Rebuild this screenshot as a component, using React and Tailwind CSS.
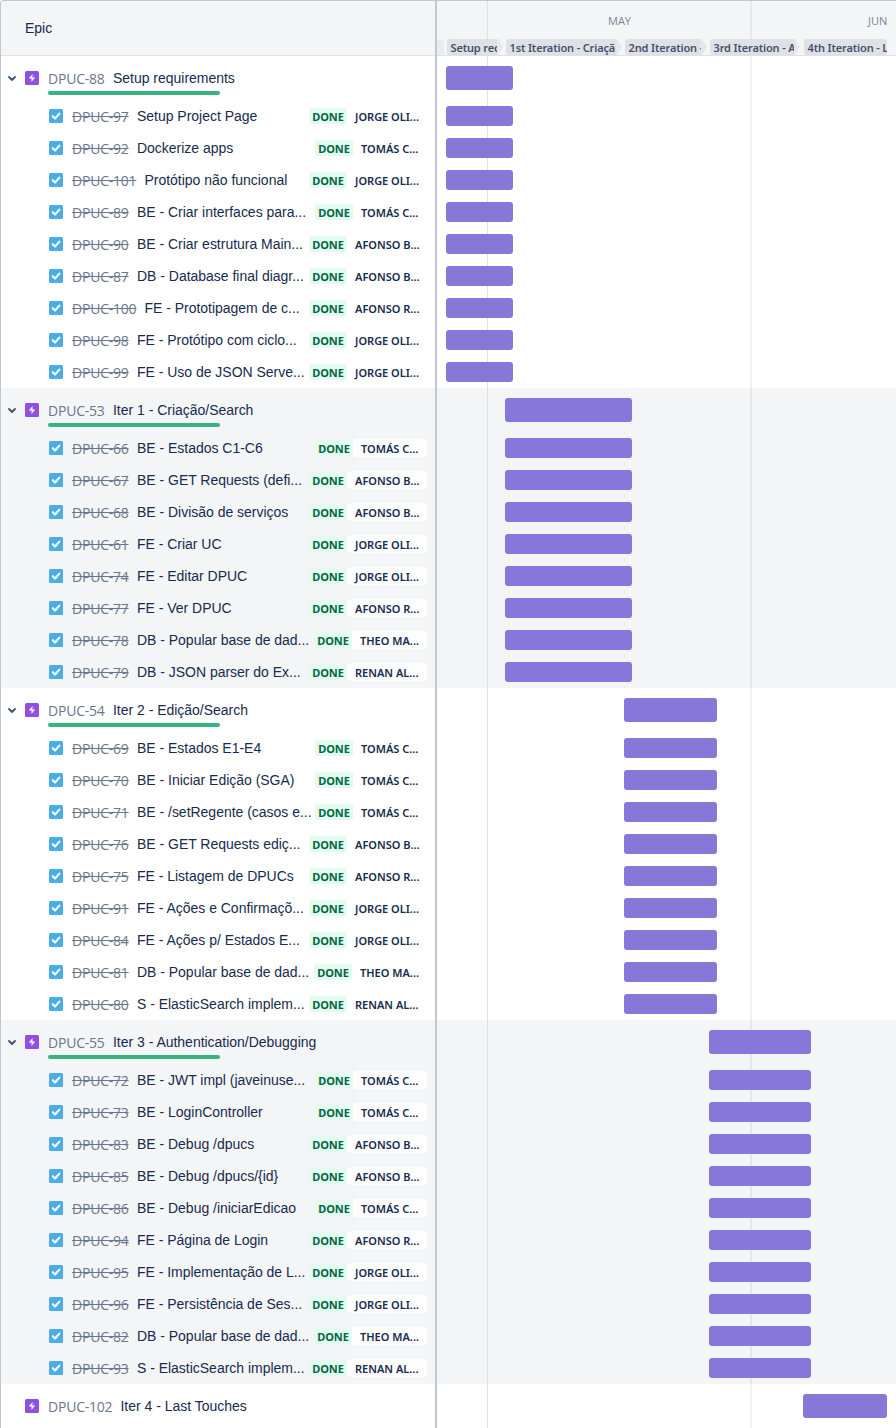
import React from "react";

const PEOPLE = {
  J: { name: "JORGE OLI...", pill: "w-[80px]", text: "w-[64px]" },
  T: { name: "TOMÁS C...", pill: "w-[74px]", text: "w-[58px]" },
  B: { name: "AFONSO B...", pill: "w-[80px]", text: "w-[64px]" },
  R: { name: "AFONSO R...", pill: "w-[80px]", text: "w-[64px]" },
  M: { name: "THEO MA...", pill: "w-[75px]", text: "w-[59px]" },
  A: { name: "RENAN AL...", pill: "w-[80px]", text: "w-[64px]" },
};

const EPICS = [
  {
    id: "DPUC-88", title: "Setup requirements", bar: "ml-[9px] w-[67px]",
    tasks: [
      ["97", "Setup Project Page", "J"],
      ["92", "Dockerize apps", "T"],
      ["101", "Protótipo não funcional", "J"],
      ["89", "BE - Criar interfaces para...", "T"],
      ["90", "BE - Criar estrutura Main...", "B"],
      ["87", "DB - Database final diagr...", "B"],
      ["100", "FE - Prototipagem de c...", "R"],
      ["98", "FE - Protótipo com ciclo...", "J"],
      ["99", "FE - Uso de JSON Serve...", "J"],
    ],
  },
  {
    id: "DPUC-53", title: "Iter 1 - Criação/Search", bar: "ml-[68px] w-[127px]", shaded: true,
    tasks: [
      ["66", "BE - Estados C1-C6", "T"],
      ["67", "BE - GET Requests (defi...", "B"],
      ["68", "BE - Divisão de serviços", "B"],
      ["61", "FE - Criar UC", "J"],
      ["74", "FE - Editar DPUC", "J"],
      ["77", "FE - Ver DPUC", "R"],
      ["78", "DB - Popular base de dad...", "M"],
      ["79", "DB - JSON parser do Ex...", "A"],
    ],
  },
  {
    id: "DPUC-54", title: "Iter 2 - Edição/Search", bar: "ml-[187px] w-[93px]",
    tasks: [
      ["69", "BE - Estados E1-E4", "T"],
      ["70", "BE - Iniciar Edição (SGA)", "T"],
      ["71", "BE - /setRegente (casos e...", "T"],
      ["76", "BE - GET Requests ediç...", "B"],
      ["75", "FE - Listagem de DPUCs", "R"],
      ["91", "FE - Ações e Confirmaçõ...", "J"],
      ["84", "FE - Ações p/ Estados E...", "J"],
      ["81", "DB - Popular base de dad...", "M"],
      ["80", "S - ElasticSearch implem...", "A"],
    ],
  },
  {
    id: "DPUC-55", title: "Iter 3 - Authentication/Debugging", bar: "ml-[272px] w-[102px]", shaded: true,
    tasks: [
      ["72", "BE - JWT impl (javeinuse...", "T"],
      ["73", "BE - LoginController", "T"],
      ["83", "BE - Debug /dpucs", "B"],
      ["85", "BE - Debug /dpucs/{id}", "B"],
      ["86", "BE - Debug /iniciarEdicao", "T"],
      ["94", "FE - Página de Login", "R"],
      ["95", "FE - Implementação de L...", "J"],
      ["96", "FE - Persistência de Ses...", "J"],
      ["82", "DB - Popular base de dad...", "M"],
      ["93", "S - ElasticSearch implem...", "A"],
    ],
  },
  { id: "DPUC-102", title: "Iter 4 - Last Touches", bar: "ml-[366px] w-[84px]", tasks: [] },
];

const SPRINTS = [
  { label: "Setup rec", width: "w-[50px]", gap: "mr-[3px]" },
  { label: "1st Iteration - Criaçã", width: "w-[110px]", gap: "mr-[3px]" },
  { label: "2nd Iteration -", width: "w-[76px]", gap: "mr-[3px]" },
  { label: "3rd Iteration - A", width: "w-[84px]", gap: "mr-[4px]" },
  { label: "4th Iteration - L", width: "w-[83px]", last: true },
];

function EpicIcon() {
  return (
    <svg className="size-[14px] shrink-0" viewBox="0 0 14 14">
      <rect width="14" height="14" rx="1.5" fill="#904ee2" />
      <path d="M7.5 3 L3.8 7.6 H6.5 V11 L10.2 6.4 H7.5 Z" fill="#fff" />
    </svg>
  );
}

function TaskIcon() {
  return (
    <svg className="size-[14px] shrink-0" viewBox="0 0 14 14">
      <rect width="14" height="14" rx="1.5" fill="#4bade8" />
      <path d="M3.8 7.3 L6 9.5 L10.3 4.6" fill="none" stroke="#fff" strokeWidth="2" strokeLinecap="round" strokeLinejoin="round" />
    </svg>
  );
}

function Chevron() {
  return (
    <svg className="h-[5px] w-[8px]" viewBox="0 0 8 5">
      <path d="M1 1 L4 4 L7 1" fill="none" stroke="#42526e" strokeWidth="1.8" strokeLinecap="round" strokeLinejoin="round" />
    </svg>
  );
}

function Key({ id, done }) {
  const wide = id.length > 7;
  return (
    <span
      className={
        "relative top-px shrink-0 whitespace-nowrap font-['Open_Sans','Noto_Sans',sans-serif] text-[14px] leading-5 tracking-[-0.22px] text-[#6b778c] " +
        (wide ? "w-[64.5px] " : "w-[57px] ") +
        (done ? "line-through" : "")
      }
    >
      {id}
    </span>
  );
}

function Task({ num, title, who }) {
  const p = PEOPLE[who];
  return (
    <div className="flex h-8 items-center pr-2 pl-[48px]">
      <TaskIcon />
      <span className="w-[9px] shrink-0" />
      <Key id={"DPUC-" + num} done />
      <span className="ml-2 min-w-0 flex-1 whitespace-nowrap text-[14px] leading-5 tracking-[-0.02px] text-[#172b4d]">{title}</span>
      <div className="flex shrink-0 items-center font-['Noto_Sans','Open_Sans',sans-serif] text-[11px] leading-4">
        <span className="flex h-4 w-[38px] justify-center rounded-[3px] bg-[#e3fcef] font-bold tracking-[-0.1px] text-[#006644]">
          <span className="relative top-px">DONE</span>
        </span>
        <span className={"flex h-[18px] items-center justify-center rounded-[3px] bg-white/80 font-semibold text-[#172b4d] " + p.pill}>
          <span className={"relative top-px whitespace-nowrap " + p.text}>{p.name}</span>
        </span>
      </div>
    </div>
  );
}

function Epic({ epic }) {
  return (
    <section className={"flex " + (epic.shaded ? "bg-[#f4f5f7]" : "bg-white")}>
      <div className="w-[434px] shrink-0">
        <div className="flex h-11 items-center">
          <span className="flex w-6 justify-center pr-[2px]">{epic.tasks.length > 0 && <Chevron />}</span>
          <EpicIcon />
          <div className="relative ml-[9px] flex items-center">
            <Key id={epic.id} />
            <span className="ml-2 whitespace-nowrap text-[14px] leading-5 tracking-[-0.02px] text-[#172b4d]">{epic.title}</span>
            {epic.tasks.length > 0 && (
              <span className="absolute top-[23px] left-0 h-1 w-[172px] rounded-full bg-[#36b37e]" />
            )}
          </div>
        </div>
        {epic.tasks.map(([num, title, who]) => (
          <Task key={num} num={num} title={title} who={who} />
        ))}
      </div>
      <div className="w-[2px] shrink-0 bg-[#c1c7d0]" />
      <div className="relative flex-1">
        <div className="absolute inset-y-0 left-[50px] w-px bg-[#dfe1e6]" />
        <div className="absolute inset-y-0 left-[313px] w-[2px] bg-[#091e42]/6" />
        <div className="relative flex h-11 items-center">
          <div className={"h-6 rounded-[3px] bg-[#8777d9] " + epic.bar} />
        </div>
        {epic.tasks.map(([num]) => (
          <div key={num} className="relative flex h-8 items-center">
            <div className={"h-5 rounded-[3px] bg-[#8777d9] " + epic.bar} />
          </div>
        ))}
      </div>
    </section>
  );
}

function Sprint({ sprint }) {
  return (
    <div className={"flex h-4 shrink-0 " + (sprint.gap || "")}>
      <div className={"overflow-hidden rounded-l-[3px] bg-[#dfe1e6] pl-[3.5px] " + sprint.width + (sprint.last ? " rounded-r-[3px]" : "")}>
        <span className="relative top-px block whitespace-nowrap font-['Noto_Sans','Open_Sans',sans-serif] text-[11px] leading-4 font-semibold tracking-[-0.15px] text-[#42526e]">
          {sprint.label}
        </span>
      </div>
      {!sprint.last && (
        <svg className="h-4 w-[6px]" viewBox="0 0 6 16">
          <path d="M0 0 H1 L6 8 L1 16 H0 Z" fill="#e5e7eb" />
        </svg>
      )}
    </div>
  );
}

export default function App() {
  return (
    <div className="h-[1428px] w-[896px] overflow-hidden rounded-tl-[4px] border-t border-l border-[#c1c7d0] bg-white font-['Liberation_Sans',Arial,sans-serif]">
      <header className="flex h-[55px] bg-[#f4f5f7]">
        <div className="flex w-[434px] shrink-0 items-center border-b border-[#dfe1e6] pl-6 text-[14px] text-[#172b4d]">Epic</div>
        <div className="w-[2px] shrink-0 bg-[#c1c7d0]" />
        <div className="relative flex-1 overflow-hidden border-b border-[#dfe1e6]">
          <div className="absolute inset-y-0 left-[50px] w-px bg-[#dfe1e6]" />
          <div className="absolute inset-y-0 left-[313px] w-[2px] bg-[#091e42]/6" />
          <div className="relative flex h-[38px] items-center pt-[3px] pl-[171px] font-['Open_Sans','Noto_Sans',sans-serif] text-[11px] text-[#7a869a]">
            <span className="w-[260px]">MAY</span>
            <span>JUN</span>
          </div>
          <div className="relative flex">
            <div className="mr-[3px] h-4 w-[7px] shrink-0 rounded-r-[2px] bg-[#ebecf0]" />
            {SPRINTS.map((s) => (
              <Sprint key={s.label} sprint={s} />
            ))}
          </div>
        </div>
      </header>
      {EPICS.map((e) => (
        <Epic key={e.id} epic={e} />
      ))}
    </div>
  );
}
